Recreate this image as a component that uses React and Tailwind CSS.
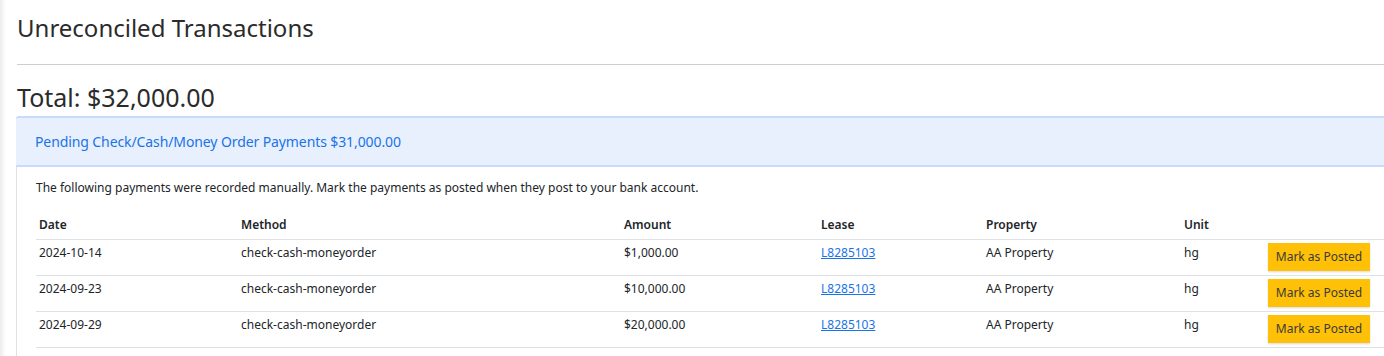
import React from "react";

const rows = [
    { date: "2024-10-14", method: "check-cash-moneyorder", amount: "$1,000.00", lease: "L8285103", property: "AA Property", unit: "hg" },
    { date: "2024-09-23", method: "check-cash-moneyorder", amount: "$10,000.00", lease: "L8285103", property: "AA Property", unit: "hg" },
    { date: "2024-09-29", method: "check-cash-moneyorder", amount: "$20,000.00", lease: "L8285103", property: "AA Property", unit: "hg" },
];

export default function App() {
    return (
        <div className="flex w-[1384px] h-[356px] overflow-hidden bg-white text-[#212529]" style={{ fontFamily: '"Noto Sans", "Open Sans", sans-serif' }}>
            <div className="w-[6px] shrink-0 bg-gradient-to-r from-[#ececec] to-white" />
            <div className="flex-1 min-w-0 pl-[10px]">
                <h1 className="mt-[12px] ml-[1px] text-[24px] leading-[32px] text-[#2b2b2b]">Unreconciled Transactions</h1>
                <hr className="mt-[20px] ml-[1px] border-t border-[#cdcdcd]" />
                <h2 className="mt-[16px] ml-[1px] text-[25px] leading-[33px] text-[#2b2b2b]">Total: $32,000.00</h2>
                <div className="mt-[2px] w-[1420px] border border-[#dee2e6] rounded-t-[3px] pb-[30px]">
                    <div className="h-[51px] flex items-center pl-[19px] bg-[#e8f0fe] border-y-2 border-[#c7dbfa] -mx-px -mt-px rounded-t-[3px]">
                        <span className="text-[14px] text-[#1a73e8] tracking-[-0.1px]">Pending Check/Cash/Money Order Payments $31,000.00</span>
                    </div>
                    <div className="pl-[19px] pt-[12px]">
                        <p className="text-[12px] leading-[18px]">The following payments were recorded manually. Mark the payments as posted when they post to your bank account.</p>
                        <table className="mt-[19px] text-[12px] leading-[18px] border-collapse">
                            <thead>
                                <tr className="border-b border-[#dee2e6]">
                                    <th className="w-[202px] text-left font-semibold px-[3px] pb-[5px]">Date</th>
                                    <th className="w-[383px] text-left font-semibold px-[3px] pb-[5px]">Method</th>
                                    <th className="w-[197px] text-left font-semibold px-[3px] pb-[5px]">Amount</th>
                                    <th className="w-[165px] text-left font-semibold px-[3px] pb-[5px]">Lease</th>
                                    <th className="w-[198px] text-left font-semibold px-[3px] pb-[5px]">Property</th>
                                    <th className="w-[87px] text-left font-semibold px-[3px] pb-[5px]">Unit</th>
                                    <th className="w-[130px]" />
                                </tr>
                            </thead>
                            <tbody>
                                {rows.map((r) => (
                                    <tr key={r.date} className="border-b border-[#dee2e6] align-top">
                                        <td className="px-[3px] pt-[4px]">{r.date}</td>
                                        <td className="px-[3px] pt-[4px]">{r.method}</td>
                                        <td className="px-[3px] pt-[4px]">{r.amount}</td>
                                        <td className="px-[3px] pt-[4px]">
                                            <a href="#" className="text-[#1a73e8] underline">{r.lease}</a>
                                        </td>
                                        <td className="px-[3px] pt-[4px]">{r.property}</td>
                                        <td className="px-[3px] pt-[4px]">{r.unit}</td>
                                        <td className="pt-[3px] pb-[4px]">
                                            <button className="block h-[28px] w-[102px] bg-[#ffc107] text-[#3a3a3a] text-[12px] shadow-[0_1px_2px_rgba(0,0,0,0.15)]">Mark as Posted</button>
                                        </td>
                                    </tr>
                                ))}
                            </tbody>
                        </table>
                    </div>
                </div>
            </div>
        </div>
    );
}
